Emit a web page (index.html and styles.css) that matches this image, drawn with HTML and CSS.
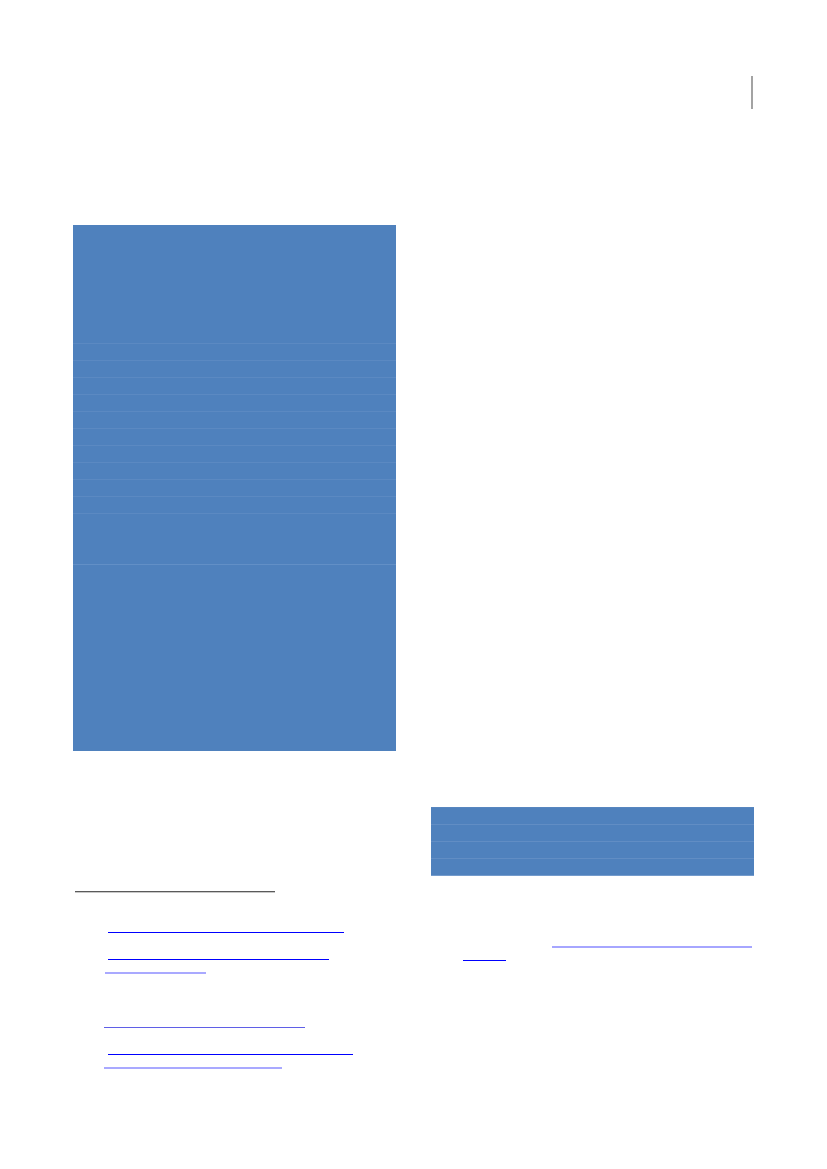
FILE: index.html
```html
<!DOCTYPE html>
<html lang="en">
<head>
<meta charset="utf-8">
<title>Page</title>
<link rel="stylesheet" href="styles.css">
</head>
<body>
<div class="page">
  <header class="head">
    <div class="bar"></div>
  </header>
  <main class="cols">
    <section class="col">
      <div class="panel panel-a">
        <div class="row row-head"></div>
        <div class="row row-s"></div>
        <div class="row row-s"></div>
        <div class="row row-s"></div>
        <div class="row row-s"></div>
        <div class="row row-s"></div>
        <div class="row row-s"></div>
        <div class="row row-s"></div>
        <div class="row row-s"></div>
        <div class="row row-s"></div>
        <div class="row row-s"></div>
        <div class="row row-m"></div>
        <div class="row row-l"></div>
      </div>
      <div class="rule r1"></div>
      <div class="rule r2"></div>
      <div class="rule r3"></div>
      <div class="rule r4"></div>
      <div class="rule r5"></div>
      <div class="rule r6"></div>
      <div class="rule r7"></div>
    </section>
    <section class="col">
      <div class="panel panel-b">
        <div class="row row-b first"></div>
        <div class="row row-b"></div>
        <div class="row row-b"></div>
        <div class="row row-b"></div>
      </div>
      <div class="rule r8"></div>
      <div class="rule r9"></div>
    </section>
  </main>
</div>
</body>
</html>
```
FILE: styles.css
```css
html, body { margin: 0; padding: 0; background: #ffffff; }
body { font-family: "Liberation Sans", Arial, sans-serif; }
.page { width: 827px; height: 1169px; overflow: hidden; }
.head { display: flex; justify-content: flex-end; padding: 76px 74px 0 0; }
.bar { width: 2px; height: 33px; background: #a3a3a3; }
.cols { display: grid; grid-template-columns: 323px 323px; column-gap: 35px; padding-left: 73px; margin-top: 116px; }
.col { display: flex; flex-direction: column; align-items: flex-start; }
.panel { background: #4f81bd; width: 323px; }
.row { border-top: 1px solid #5b89c2; box-sizing: border-box; }
.row-head { height: 118px; border-top: none; }
.row-s { height: 17px; }
.row-m { height: 51px; }
.row-l { height: 187px; border-top-color: #628fc6; }
.panel-b { margin-top: 582px; border-bottom: 1px solid #749bcc; }
.row-b { height: 17px; border-top-color: #618dc4; }
.row-b.first { border-top-color: #5786bf; }
.rule { height: 1px; }
.r1 { margin: 140px 0 0 2px; width: 200px; background: #5a5a5a; box-shadow: 0 1px 0 #c8c8c8; }
.r2 { margin: 40px 0 0 35px; width: 236px; background: #0000ff; }
.r3 { margin: 26px 0 0 35px; width: 221px; background: #0000ff; }
.r4 { margin: 12px 0 0 32px; width: 101px; background: #a9a9ff; height: 2px; }
.r5 { margin: 53px 0 0 31px; width: 201px; background: #5f5fe6; }
.r6 { margin: 26px 0 0 35px; width: 245px; background: #0000ff; }
.r7 { margin: 12px 0 0 31px; width: 178px; background: #a9a9ff; height: 2px; }
.r8 { margin: 70px 0 0 121px; width: 200px; background: #a6a6ff; height: 2px; }
.r9 { margin: 12px 0 0 32px; width: 43px; background: #0000ff; }
```
